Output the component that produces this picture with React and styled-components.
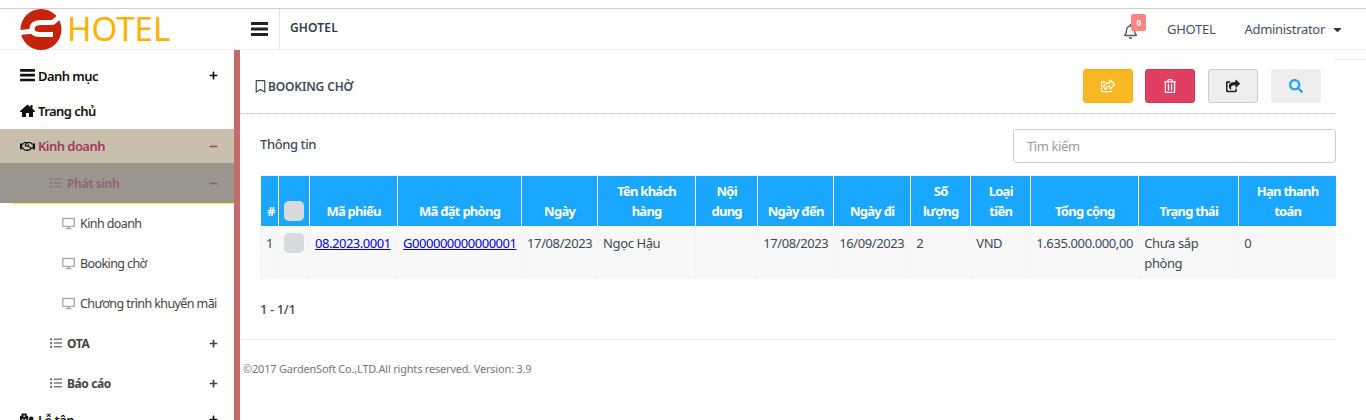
import React from "react";
import styled, { createGlobalStyle } from "styled-components";
import {
  FaRegHandshake,
  FaList,
  FaDesktop,
  FaRegBookmark,
  FaRegBell,
  FaRegShareSquare,
  FaShareSquare,
  FaRegTrashAlt,
  FaSearch,
  FaPlus,
  FaMinus,
  FaCaretDown,
  FaHospitalUser,
} from "react-icons/fa";

const GlobalStyle = createGlobalStyle`
  html, body {
    margin: 0;
    height: 420px;
    overflow: hidden;
    background: #fff;
  }
  body {
    font-family: "Noto Sans", "Liberation Sans", sans-serif;
    font-size: 13px;
    letter-spacing: -0.4px;
    color: #3e4a59;
  }
`;

const columns = [
  { title: "#", width: 18 },
  { title: "", width: 31, check: true },
  { title: "Mã phiếu", width: 88 },
  { title: "Mã đặt phòng", width: 124 },
  { title: "Ngày", width: 76 },
  { title: "Tên khách hàng", width: 98 },
  { title: "Nội dung", width: 62 },
  { title: "Ngày đến", width: 76 },
  { title: "Ngày đi", width: 77 },
  { title: "Số lượng", width: 60 },
  { title: "Loại tiền", width: 60 },
  { title: "Tổng cộng", width: 108 },
  { title: "Trạng thái", width: 100 },
  { title: "Hạn thanh toán", width: 97 },
];

const BarsIcon = ({ size }) => (
  <svg width={size} height={(size * 14) / 17} viewBox="0 0 17 14" fill="currentColor">
    <rect y="0" width="17" height="3" rx="0.5" />
    <rect y="5.5" width="17" height="3" rx="0.5" />
    <rect y="11" width="17" height="3" rx="0.5" />
  </svg>
);

const HomeIcon = () => (
  <svg width="15" height="13" viewBox="0 0 15 13" fill="currentColor">
    <path d="M0 7L7.500 0.500L10.500 3V1H12.500V4.800L15 7V8H13V13H9V9H6V13H2V8H0z" />
  </svg>
);

const Logo = () => (
  <svg width="42" height="41" viewBox="0 0 42 41">
    <circle cx="21" cy="20.500" r="20.500" fill="#c4230c" />
    <path
      d="M43 5L33 13.200Q28 13.600 22 13.600Q12 13.600 12 20Q12 25.400 20 25.400H33M14 22L0 23.500"
      fill="none"
      stroke="#fff"
      strokeWidth="5"
    />
  </svg>
);

export default function App() {
  return (
    <Page>
      <GlobalStyle />
      <Header>
        <Brand>
          <Logo />
          <BrandName>HOTEL</BrandName>
        </Brand>
        <MenuToggle>
          <BarsIcon size={17} />
        </MenuToggle>
        <HeaderTitle>GHOTEL</HeaderTitle>
        <HeaderRight>
          <Bell>
            <FaRegBell />
            <Badge>0</Badge>
          </Bell>
          <HeaderLink>GHOTEL</HeaderLink>
          <HeaderLink>
            Administrator <FaCaretDown />
          </HeaderLink>
        </HeaderRight>
      </Header>

      <Body>
        <Sidebar>
          <TopItem>
            <TopIcon><BarsIcon size={15} /></TopIcon>
            <span>Danh mục</span>
            <Toggle><FaPlus /></Toggle>
          </TopItem>
          <TopItem>
            <TopIcon><HomeIcon /></TopIcon>
            <span>Trang chủ</span>
          </TopItem>
          <ActiveItem>
            <TopIcon><FaRegHandshake /></TopIcon>
            <span>Kinh doanh</span>
            <Toggle><FaMinus /></Toggle>
          </ActiveItem>
          <GroupActive>
            <GroupIcon><FaList /></GroupIcon>
            <span>Phát sinh</span>
            <Toggle><FaMinus /></Toggle>
          </GroupActive>
          <LeafItem><FaDesktop /><span>Kinh doanh</span></LeafItem>
          <LeafItem><FaDesktop /><span>Booking chờ</span></LeafItem>
          <LeafItem><FaDesktop /><span>Chương trình khuyến mãi</span></LeafItem>
          <GroupItem>
            <GroupIcon><FaList /></GroupIcon>
            <span>OTA</span>
            <Toggle><FaPlus /></Toggle>
          </GroupItem>
          <GroupItem>
            <GroupIcon><FaList /></GroupIcon>
            <span>Báo cáo</span>
            <Toggle><FaPlus /></Toggle>
          </GroupItem>
          <TopItem>
            <TopIcon><FaHospitalUser /></TopIcon>
            <span>Lễ tân</span>
            <Toggle><FaPlus /></Toggle>
          </TopItem>
        </Sidebar>

        <Main>
          <TitleBar>
            <PageTitle>
              <FaRegBookmark />
              BOOKING CHỜ
            </PageTitle>
            <Actions>
              <ActionBtn $bg="#f8b823" $border="#efae1e" $color="#fff"><FaRegShareSquare /></ActionBtn>
              <ActionBtn $bg="#e03e62" $border="#d33a4a" $color="#fff"><FaRegTrashAlt /></ActionBtn>
              <ActionBtn $bg="#eeeeee" $border="#cccccc" $color="#222"><FaShareSquare /></ActionBtn>
              <ActionBtn $bg="#eeeeee" $border="#eeeeee" $color="#1aa7ff"><FaSearch /></ActionBtn>
            </Actions>
          </TitleBar>

          <InfoRow>
            <InfoLabel>Thông tin</InfoLabel>
            <SearchInput placeholder="Tìm kiếm" readOnly />
          </InfoRow>

          <Table>
            <colgroup>
              {columns.map((c, idx) => (
                <col key={idx} width={c.width} />
              ))}
            </colgroup>
            <thead>
              <tr>
                {columns.map((c, idx) => (
                  <Th key={idx}>{c.check ? <Check /> : c.title}</Th>
                ))}
              </tr>
            </thead>
            <tbody>
              <tr>
                <Td>1</Td>
                <Td><Check /></Td>
                <Td><RowLink href="#">08.2023.0001</RowLink></Td>
                <Td><RowLink href="#">G000000000000001</RowLink></Td>
                <Td>17/08/2023</Td>
                <Td>Ngọc Hậu</Td>
                <Td></Td>
                <Td>17/08/2023</Td>
                <Td>16/09/2023</Td>
                <Td>2</Td>
                <Td>VND</Td>
                <Td>1.635.000.000,00</Td>
                <Td>Chưa sắp phòng</Td>
                <Td>0</Td>
              </tr>
            </tbody>
          </Table>

          <Pager>1 - 1/1</Pager>
          <Footer>©2017 GardenSoft Co.,LTD.All rights reserved. Version: 3.9</Footer>
        </Main>
      </Body>
    </Page>
  );
}

const Page = styled.div`
  height: 420px;
  overflow: hidden;
  padding-top: 8px;
  box-sizing: border-box;
`;

const Header = styled.header`
  height: 42px;
  box-sizing: border-box;
  display: flex;
  align-items: center;
  border-top: 1px solid #cfcfcf;
  border-bottom: 1px solid #eeeeee;
  padding-right: 22px;
`;

const Brand = styled.div`
  width: 234px;
  padding-left: 20px;
  box-sizing: border-box;
  display: flex;
  align-items: center;
  gap: 5px;
`;

const BrandName = styled.span`
  color: #ffb000;
  font-size: 33px;
  letter-spacing: 0;
  line-height: 40px;
`;

const MenuToggle = styled.div`
  width: 46px;
  height: 40px;
  box-sizing: border-box;
  border-right: 1px solid #e6e6e6;
  display: flex;
  align-items: center;
  padding-left: 17px;
  color: #222;
`;

const HeaderTitle = styled.div`
  margin: 0 0 3px 10px;
  font-weight: 600;
  font-size: 12px;
  letter-spacing: 0.15px;
  color: #2f3b4a;
`;

const HeaderRight = styled.div`
  margin-left: auto;
  display: flex;
  align-items: center;
  gap: 29px;
`;

const Bell = styled.div`
  position: relative;
  display: flex;
  font-size: 15px;
  color: #555e68;
  margin-top: 5px;
`;

const Badge = styled.span`
  position: absolute;
  top: -10px;
  left: 8px;
  width: 15px;
  height: 17px;
  border-radius: 2px;
  background: #ff8583;
  color: #fff;
  font-size: 8px;
  font-weight: 700;
  line-height: 17px;
  text-align: center;
`;

const HeaderLink = styled.div`
  display: flex;
  align-items: center;
  gap: 6px;
  font-size: 13px;
  letter-spacing: -0.3px;
  color: #46505e;

  svg {
    font-size: 13px;
    color: #333;
  }
`;

const Body = styled.div`
  display: flex;
`;

const Sidebar = styled.nav`
  width: 240px;
  height: 370px;
  flex-shrink: 0;
  box-sizing: border-box;
  border-right: 6px solid #c46b6b;
  padding-top: 9px;
`;

const SideRow = styled.div`
  display: flex;
  align-items: center;
  height: 35px;
  box-sizing: border-box;
`;

const Toggle = styled.span`
  margin-left: auto;
  margin-right: 16px;
  display: flex;
  font-size: 9px;
`;

const TopItem = styled(SideRow)`
  padding: 0 0 2px 20px;
  color: #111;
  font-weight: 600;
  font-size: 13px;
  letter-spacing: -0.55px;
`;

const ActiveItem = styled(TopItem)`
  background: #c8bfad;
  color: #a23a63;
  height: 34px;
  padding-bottom: 0;

  ${Toggle} {
    color: #a23a63;
  }
`;

const TopIcon = styled.span`
  width: 18px;
  display: flex;
  font-size: 15px;
  color: #111;
`;

const GroupItem = styled(SideRow)`
  height: 40px;
  padding-left: 50px;
  color: #444;
  font-weight: 700;
  font-size: 12px;
`;

const GroupActive = styled(GroupItem)`
  position: relative;
  background: #9b968d;
  color: #8d6a76;

  ${Toggle} {
    color: #8d5a6b;
  }

  &::after {
    content: "";
    position: absolute;
    left: 12px;
    right: 0;
    bottom: -1px;
    height: 1px;
    background: #f1e84c;
  }
`;

const GroupIcon = styled.span`
  width: 17px;
  display: flex;
  font-size: 12px;
  opacity: 0.7;
`;

const LeafItem = styled(SideRow)`
  height: 40px;
  padding-left: 62px;
  gap: 5px;
  color: #444;
  font-size: 12.500px;
  letter-spacing: -0.6px;

  svg {
    font-size: 13px;
    color: #aaa;
  }
`;

const Main = styled.main`
  position: relative;
  flex: 1;
  min-width: 0;

  &::after {
    content: "";
    position: absolute;
    top: 9px;
    right: 0;
    width: 32px;
    height: 1px;
    background: #eeeeee;
  }
`;

const TitleBar = styled.div`
  margin-right: 30px;
  height: 64px;
  padding: 19px 15px 0 14px;
  box-sizing: border-box;
  display: flex;
  justify-content: space-between;
  border-bottom: 1px dotted #bdbdbd;
`;

const PageTitle = styled.div`
  display: flex;
  align-items: center;
  gap: 1px;
  height: 34px;
  font-weight: 600;
  font-size: 12px;
  letter-spacing: -0.15px;
  color: #3e4a59;

  svg {
    font-size: 13px;
  }
`;

const Actions = styled.div`
  display: flex;
  gap: 12.800px;
`;

const ActionBtn = styled.div`
  width: 50px;
  height: 34px;
  box-sizing: border-box;
  display: flex;
  align-items: center;
  justify-content: center;
  border-radius: 3px;
  border: 1px solid ${(p) => p.$border};
  background: ${(p) => p.$bg};
  color: ${(p) => p.$color};
  font-size: 14px;
`;

const InfoRow = styled.div`
  margin: 15px 30px 12px 20px;
  display: flex;
  justify-content: space-between;
`;

const InfoLabel = styled.div`
  font-weight: 500;
  font-size: 13px;
  line-height: 30px;
`;

const SearchInput = styled.input`
  width: 323px;
  height: 34px;
  box-sizing: border-box;
  padding: 0 13px;
  border: 1px solid #cccccc;
  border-radius: 3px;
  font: inherit;
  letter-spacing: inherit;
  outline: none;

  &::placeholder {
    color: #9a9a9a;
  }
`;

const Table = styled.table`
  margin-left: 20px;
  width: 1076px;
  table-layout: fixed;
  border-collapse: collapse;
`;

const Th = styled.th`
  height: 50px;
  padding: 0 7px 5px;
  box-sizing: border-box;
  vertical-align: bottom;
  background: #1aa7ff;
  color: #fff;
  font-weight: 700;
  font-size: 13px;
  letter-spacing: -0.75px;
  line-height: 20px;
  text-align: center;
  border-top: 1px solid #e6f4ff;
  border-left: 1px solid #fff;
  border-right: 1px solid #fff;

  &:first-child {
    border-left: 0;
    padding: 0 0 5px 3px;
  }
  &:nth-child(2) {
    padding: 0 0 5px;
  }
  &:last-child {
    border-right: 0;
  }
`;

const Td = styled.td`
  height: 53px;
  padding: 7px 5px 5px;
  box-sizing: border-box;
  vertical-align: top;
  background: #f8f8f8;
  line-height: 20px;
  white-space: normal;
  border-left: 1px solid #f2f2f2;
  color: #3e4a59;
`;

const Check = styled.div`
  width: 20px;
  height: 20px;
  margin: 0 auto;
  border-radius: 5px;
  background: #d7dbdd;
`;

const RowLink = styled.a`
  color: #0000ee;
  text-decoration: underline;
  letter-spacing: -0.47px;
`;

const Pager = styled.div`
  margin: 20px 30px 0 20px;
  padding-bottom: 20px;
  line-height: 20px;
  font-weight: 500;
`;

const Footer = styled.footer`
  margin-right: 30px;
  padding: 19px 3px;
  border-top: 1px solid #eeeeee;
  font-size: 11px;
  letter-spacing: -0.2px;
  line-height: 20px;
  color: #777;
`;
